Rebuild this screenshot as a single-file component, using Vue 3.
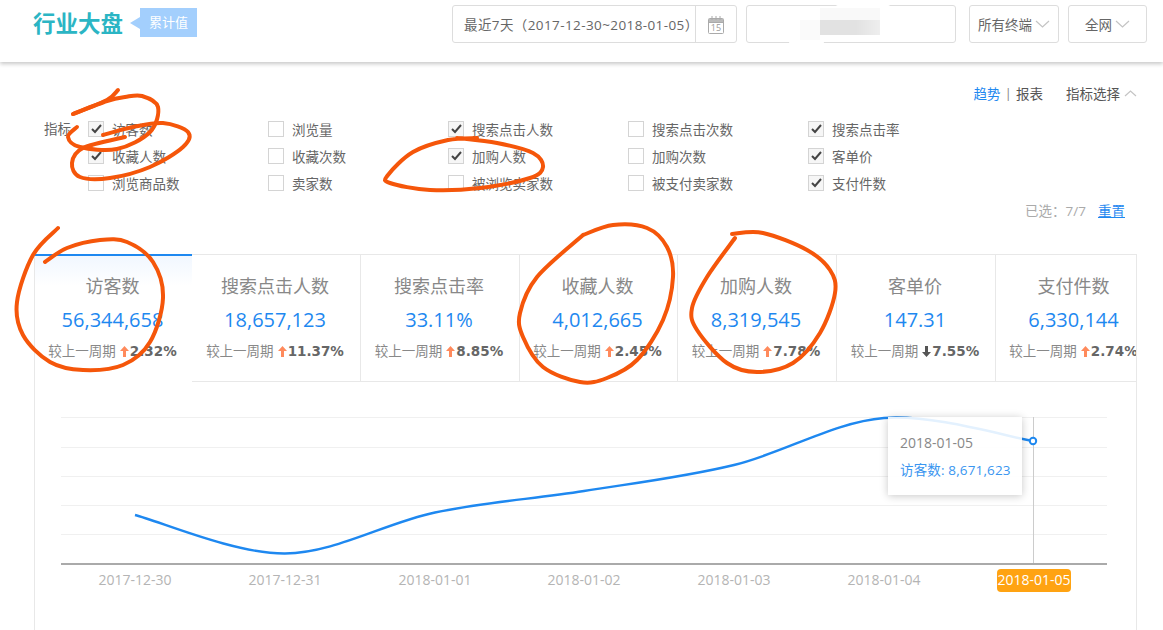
<script setup>
const checks = [
  [['访客数', true], ['浏览量', false], ['搜索点击人数', true], ['搜索点击次数', false], ['搜索点击率', true]],
  [['收藏人数', true], ['收藏次数', false], ['加购人数', true], ['加购次数', false], ['客单价', true]],
  [['浏览商品数', false], ['卖家数', false], ['被浏览卖家数', false], ['被支付卖家数', false], ['支付件数', true]],
].flat()

const tabs = [
  { name: '访客数', value: '56,344,658', rate: '2.32%', up: true, active: true },
  { name: '搜索点击人数', value: '18,657,123', rate: '11.37%', up: true },
  { name: '搜索点击率', value: '33.11%', rate: '8.85%', up: true },
  { name: '收藏人数', value: '4,012,665', rate: '2.45%', up: true },
  { name: '加购人数', value: '8,319,545', rate: '7.78%', up: true },
  { name: '客单价', value: '147.31', rate: '7.55%', up: false },
  { name: '支付件数', value: '6,330,144', rate: '2.74%', up: true },
]

// catmull-rom through the points, used for the chart line and the pen marks
const smooth = (pts, k = 6) => {
  let d = `M${pts[0][0]} ${pts[0][1]}`
  for (let i = 0; i < pts.length - 1; i++) {
    const p0 = pts[i - 1] || pts[i]
    const p1 = pts[i]
    const p2 = pts[i + 1]
    const p3 = pts[i + 2] || p2
    const c1 = [p1[0] + (p2[0] - p0[0]) / k, p1[1] + (p2[1] - p0[1]) / k]
    const c2 = [p2[0] - (p3[0] - p1[0]) / k, p2[1] - (p3[1] - p1[1]) / k]
    d += ` C${c1[0]} ${c1[1]} ${c2[0]} ${c2[1]} ${p2[0]} ${p2[1]}`
  }
  return d
}

const gridLines = [417, 447, 476, 505, 534]
const dates = [
  ['2017-12-30', 135], ['2017-12-31', 285], ['2018-01-01', 435], ['2018-01-02', 584],
  ['2018-01-03', 734], ['2018-01-04', 884],
]
const linePath = smooth([
  [135, 515], [285, 553.5], [435, 512.5], [584, 491], [734, 465], [884, 418], [1033, 441],
])

const marks = [
  [[118, 90], [107, 100], [73, 114]],
  [[73, 114], [107, 101], [125, 97], [142, 96], [158, 107], [150, 132], [117, 149], [80, 147], [68, 137], [77, 127]],
  [[103, 135], [133, 127], [163, 123], [188, 132], [183, 147], [150, 167], [110, 178], [80, 177], [72, 163], [83, 148], [125, 137]],
  [[477, 138], [448, 140], [413, 152], [388, 175], [390, 183], [430, 190], [480, 188], [530, 178], [543, 167], [533, 153], [497, 143], [457, 138]],
  [[58, 228], [33, 255], [17, 302], [23, 335], [50, 362], [83, 370], [123, 365], [150, 342], [163, 298], [153, 262], [127, 242], [100, 240], [67, 248], [45, 262]],
  [[583, 235], [613, 225], [647, 228], [667, 247], [673, 277], [663, 320], [637, 360], [607, 378], [580, 382], [543, 367], [523, 337], [520, 313], [537, 277], [583, 235]],
  [[732, 234], [763, 233], [807, 250], [830, 270], [835, 293], [820, 333], [793, 363], [757, 372], [727, 363], [697, 330], [692, 308], [707, 277], [735, 238]],
].map((m) => smooth(m))
</script>

<template>
  <div class="page">
    <header class="topbar">
      <h1 class="logo">行业大盘</h1>
      <span class="tag">累计值</span>
      <div class="controls">
        <div class="box date-box">
          <span class="date-text">最近7天（2017-12-30~2018-01-05）</span>
          <span class="cal">
            <svg width="18" height="19" viewBox="0 0 18 19" fill="none" stroke="#aaa">
              <rect x="1.5" y="3.5" width="15" height="15" rx="1" />
              <path d="M1.5 7.5h15" />
              <path d="M2 4h14v3H2z" fill="#bbb" stroke="none" />
              <path d="M5 1v4M9 1v4M13 1v4" />
              <text x="9" y="16" text-anchor="middle" font-size="9" stroke="none" fill="#999">15</text>
            </svg>
          </span>
        </div>
        <div class="box search-box">
          <span class="smudge-top"></span>
          <span class="smudge-bottom"></span>
          <span class="smudge-light"></span>
          <span class="smudge-left"></span>
          <span class="smudge-gray"></span>
        </div>
        <div class="box select term">所有终端
          <svg class="chev" width="15" height="8" viewBox="0 0 15 8" fill="none" stroke="#c4c4c4" stroke-width="1.2"><path d="M1 1l6.5 6L14 1" /></svg>
        </div>
        <div class="box select net">全网
          <svg class="chev" width="15" height="8" viewBox="0 0 15 8" fill="none" stroke="#c4c4c4" stroke-width="1.2"><path d="M1 1l6.5 6L14 1" /></svg>
        </div>
      </div>
    </header>

    <section class="filters">
      <div class="view-bar">
        <span class="link">趋势</span><span class="sep">|</span><span>报表</span>
        <span class="pick">指标选择</span>
        <svg width="13" height="7" viewBox="0 0 13 7" fill="none" stroke="#c4c4c4" stroke-width="1.2"><path d="M1 6l5.5-5L12 6" /></svg>
      </div>
      <div class="metric-row">
        <span class="metric-label">指标</span>
        <div class="metric-grid">
          <label v-for="[name, on] in checks" :key="name" class="check">
            <span class="tick" :class="{ on }">
              <svg v-if="on" width="11" height="10" viewBox="0 0 11 10" fill="none" stroke="#444" stroke-width="2"><path d="M1 5l3 3 6-7" /></svg>
            </span>
            {{ name }}
          </label>
        </div>
      </div>
      <div class="selected">已选：7/7<a class="reset">重置</a></div>
    </section>

    <section class="tabs">
      <div v-for="t in tabs" :key="t.name" class="tab" :class="{ active: t.active }">
        <div class="tab-name">{{ t.name }}</div>
        <div class="tab-value">{{ t.value }}</div>
        <div class="tab-sub">
          较上一周期
          <svg class="arrow" width="9" height="11" viewBox="0 0 9 11" :fill="t.up ? '#ff8a5c' : '#555'">
            <path v-if="t.up" d="M4.5 0L9 5H6v6H3V5H0z" />
            <path v-else d="M4.5 11L0 6h3V0h3v6h3z" />
          </svg><b>{{ t.rate }}</b>
        </div>
      </div>
    </section>

    <section class="chart">
      <svg class="plot" width="1101" height="210" viewBox="35 382 1101 210">
        <line v-for="y in gridLines" :key="y" x1="61" x2="1107" :y1="y + 0.5" :y2="y + 0.5" stroke="#f0f0f0" />
        <line x1="1033.5" x2="1033.5" y1="417" y2="564" stroke="#ccc" />
        <line x1="61" x2="1107" y1="564" y2="564" stroke="#aaa" stroke-width="2" />
        <path :d="linePath" fill="none" stroke="#1e88f0" stroke-width="2.4" />
        <circle cx="1033" cy="441" r="3.2" fill="#fff" stroke="#1e88f0" stroke-width="2" />
        <text v-for="[d, x] in dates" :key="d" :x="x" y="585" text-anchor="middle" class="axis">{{ d }}</text>
        <rect x="997" y="569" width="74" height="23" rx="4" fill="#ffa312" />
        <text x="1034" y="585" text-anchor="middle" class="axis now">2018-01-05</text>
      </svg>
      <div class="tooltip">
        <div class="tip-date">2018-01-05</div>
        <div class="tip-val">访客数: 8,671,623</div>
      </div>
    </section>

    <svg class="pen" width="1163" height="630" viewBox="0 0 1163 630" fill="none" stroke="#f5560a" stroke-width="4" stroke-linecap="round" stroke-linejoin="round">
      <path v-for="(d, i) in marks" :key="i" :d="d" />
    </svg>
  </div>
</template>

<style scoped>
.page {
  position: relative;
  width: 1163px;
  height: 630px;
  overflow: hidden;
  background: #fff;
  color: #666;
  font-family: "Open Sans", "Noto Sans CJK SC", sans-serif;
  font-size: 13.5px;
}

.topbar {
  display: flex;
  align-items: flex-start;
  box-sizing: border-box;
  height: 62px;
  padding: 5px 16px 0 33px;
  box-shadow: 0 2px 4px rgba(0, 0, 0, 0.22);
}
.logo {
  margin: 0;
  color: #2bb5c4;
  font-size: 22.5px;
  font-weight: 700;
  line-height: 38px;
}
.tag {
  position: relative;
  box-sizing: border-box;
  width: 57px;
  height: 29px;
  margin: 3px 0 0 17px;
  background: #a3cffd;
  color: #fff;
  font-size: 13px;
  line-height: 29px;
  text-align: center;
}
.tag::before {
  content: "";
  position: absolute;
  left: -10px;
  top: 9px;
  border: 6px solid transparent;
  border-left: 0;
  border-right: 10px solid #a3cffd;
}

.controls {
  display: flex;
  margin-left: auto;
}
.box {
  box-sizing: border-box;
  display: flex;
  align-items: center;
  height: 38px;
  border: 1px solid #ddd;
  border-radius: 3px;
  background: #fff;
}
.date-box {
  width: 285px;
  padding-left: 11px;
}
.date-text {
  width: 231px;
  letter-spacing: 0.4px;
  white-space: nowrap;
}
.cal {
  display: flex;
  align-items: center;
  justify-content: center;
  flex: 1;
  height: 100%;
  border-left: 1px solid #ddd;
}
.search-box {
  position: relative;
  width: 210px;
  margin-left: 9px;
}
.smudge-top {
  position: absolute;
  left: 88px;
  top: -5px;
  width: 56px;
  height: 14px;
  border-radius: 50%;
  background: #fff;
}
.smudge-bottom {
  position: absolute;
  left: 41px;
  top: 28px;
  width: 37px;
  height: 26px;
  border-radius: 50%;
  background: #fff;
}
.smudge-light {
  position: absolute;
  left: 73px;
  top: 2px;
  width: 60px;
  height: 12px;
  background: #f9f9f9;
}
.smudge-left {
  position: absolute;
  left: 53px;
  top: 14px;
  width: 20px;
  height: 20px;
  background: #fafafa;
}
.smudge-gray {
  position: absolute;
  left: 73px;
  top: 14px;
  width: 60px;
  height: 15px;
  background: linear-gradient(90deg, #e2e2e2 60%, #eee);
}
.select {
  justify-content: center;
  gap: 3px;
  white-space: nowrap;
}
.term {
  width: 90px;
  margin-left: 13px;
}
.net {
  width: 79px;
  margin-left: 9px;
}

.filters {
  padding: 22px 26px 0 44px;
}
.view-bar {
  display: flex;
  justify-content: flex-end;
  align-items: center;
  gap: 4px;
  height: 18px;
  color: #555;
}
.link,
.reset {
  color: #1e88f0;
}
.sep {
  color: #888;
}
.pick {
  margin-left: 19px;
}
.metric-row {
  display: flex;
  margin-top: 13px;
}
.metric-label {
  width: 44px;
  padding-top: 1px;
  line-height: 27px;
}
.metric-grid {
  display: grid;
  grid-template-columns: repeat(5, 180px);
  grid-auto-rows: 27px;
}
.check {
  display: flex;
  align-items: center;
  gap: 8px;
  white-space: nowrap;
}
.tick {
  box-sizing: border-box;
  display: flex;
  align-items: center;
  justify-content: center;
  width: 16px;
  height: 16px;
  border: 1.5px solid #d4d4d4;
  background: #fff;
}
.tick.on {
  background: #f6f6f6;
}
.selected {
  display: flex;
  justify-content: flex-end;
  gap: 12px;
  margin-top: 5px;
  padding-right: 12px;
  color: #aaa;
  line-height: 20px;
}
.reset {
  text-decoration: underline;
}

.tabs {
  display: grid;
  grid-template-columns: 158px 169px 159px 158px 159px 159px 158px;
  box-sizing: border-box;
  width: 1103px;
  height: 128px;
  margin: 33px 0 0 34px;
  overflow: hidden;
  border-right: 1px solid #e8e8e8;
}
.tab {
  box-sizing: border-box;
  display: flex;
  flex-direction: column;
  align-items: center;
  padding-right: 2px;
  border-top: 1px solid #e8e8e8;
  border-right: 1px solid #e8e8e8;
  border-bottom: 1px solid #e8e8e8;
  white-space: nowrap;
}
.tab.active {
  border-top: 2px solid #1e88f0;
  border-bottom: 0;
  border-right: 0;
  border-left: 1px solid #e8e8e8;
  background: linear-gradient(#f1f7ff, #fff 30px);
}
.tab.active .tab-name {
  margin-top: 18px;
}
.tab-name {
  margin-top: 19px;
  color: #888;
  font-size: 18px;
  line-height: 24px;
}
.tab-value {
  margin-top: 8px;
  color: #1e88f0;
  font-size: 20px;
  line-height: 28px;
}
.tab-sub {
  display: flex;
  align-items: center;
  margin-top: 7px;
  color: #888;
  line-height: 20px;
}
.arrow {
  margin: 0 1px 0 4px;
}
.tab-sub b {
  color: #666;
  font-family: "DejaVu Sans", sans-serif;
  font-size: 13.5px;
}

.chart {
  position: relative;
  box-sizing: border-box;
  width: 1103px;
  height: 249px;
  margin-left: 34px;
  border-left: 1px solid #e8e8e8;
  border-right: 1px solid #e8e8e8;
}
.plot {
  display: block;
}
.axis {
  fill: #b4b4b4;
  font-size: 14px;
}
.axis.now {
  fill: #fff;
}
.tooltip {
  position: absolute;
  left: 853px;
  top: 35px;
  box-sizing: border-box;
  width: 134px;
  height: 78px;
  padding: 16px 12px 0;
  background: rgba(255, 255, 255, 0.88);
  box-shadow: 0 1px 8px rgba(0, 0, 0, 0.22);
  color: #888;
  font-size: 14px;
}
.tip-val {
  margin-top: 7px;
  color: #3a96f0;
  font-size: 13.5px;
  letter-spacing: 0.15px;
  white-space: nowrap;
}

.pen {
  position: absolute;
  left: 0;
  top: 0;
  pointer-events: none;
}
</style>
